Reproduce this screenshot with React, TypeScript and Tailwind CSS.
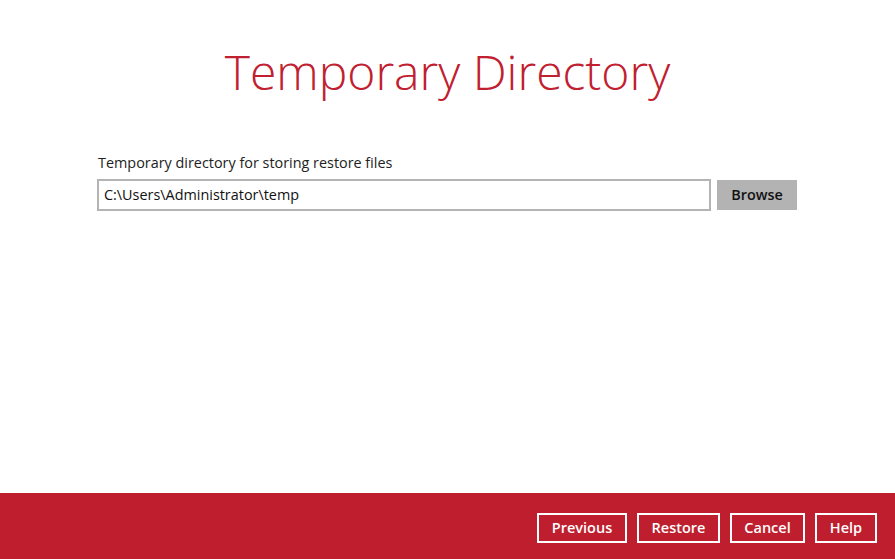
import React from 'react';

const font = { fontFamily: '"Open Sans", "Liberation Sans", sans-serif' };

const buttons = [
  { label: 'Previous', w: 'w-[90px]' },
  { label: 'Restore', w: 'w-[83px]' },
  { label: 'Cancel', w: 'w-[75px]' },
  { label: 'Help', w: 'w-[62px]' },
];

export default function App() {
  return (
    <div className="w-[895px] h-[559px] flex flex-col bg-white overflow-hidden" style={font}>
      <main className="flex-1 flex flex-col">
        <h1 className="mt-[38px] text-center text-[48px] leading-[68px] font-light text-[#c0202f]">
          Temporary Directory
        </h1>

        <section className="mt-[47px] ml-[97px] w-[700px]">
          <label className="block pl-px text-[14.4px] leading-[20px] text-[#222]">
            Temporary directory for storing restore files
          </label>
          <div className="mt-[6px] flex items-center gap-[6px]">
            <input
              readOnly
              value="C:\Users\Administrator\temp"
              className="w-[614px] h-[32px] border-2 border-[#b4b4b4] px-[5px] pb-[2px] text-[14.4px] text-[#111] outline-none"
            />
            <button className="w-[80px] h-[30px] bg-[#b3b3b3] text-[14.4px] font-semibold text-[#111]">
              Browse
            </button>
          </div>
        </section>
      </main>

      <footer className="h-[66px] bg-[#be1e2d] flex items-center justify-end gap-[10px] pr-[18px] pt-[4px]">
        {buttons.map((b) => (
          <button
            key={b.label}
            className={`${b.w} h-[30px] border-2 border-white text-white text-[14.5px] font-semibold`}
          >
            {b.label}
          </button>
        ))}
      </footer>
    </div>
  );
}
